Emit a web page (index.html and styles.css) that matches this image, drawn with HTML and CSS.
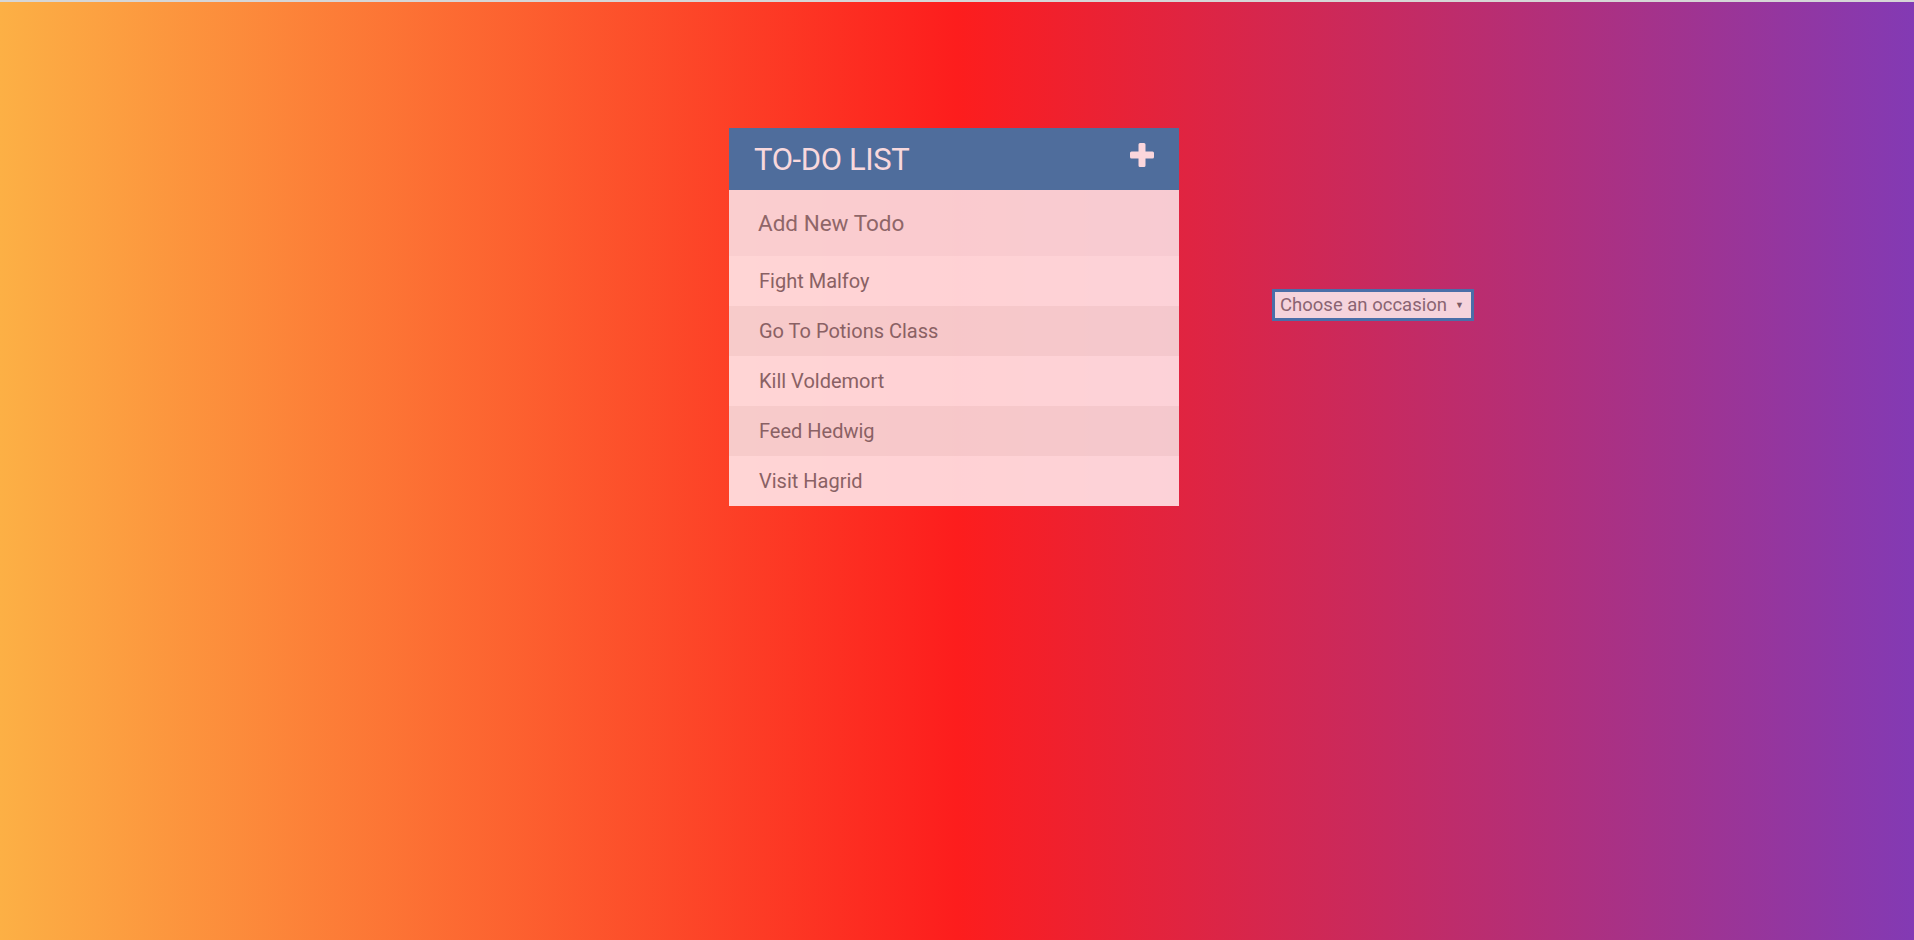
FILE: index.html
```html
<!DOCTYPE html>
<html>
<head>
<meta charset="utf-8">
<title>To-Do List</title>
<link rel="stylesheet" href="styles.css">
</head>
<body>
<div class="page">
  <div class="card">
    <div class="card-header">
      <h1 class="title">TO-DO LIST</h1>
      <svg class="plus" width="24" height="24" viewBox="0 0 24 24"><path d="M10 0h4a1.5 1.5 0 0 1 1.5 1.5V8.5h7A1.5 1.5 0 0 1 24 10v4a1.5 1.5 0 0 1-1.5 1.5h-7v7A1.5 1.5 0 0 1 14 24h-4a1.5 1.5 0 0 1-1.5-1.5v-7h-7A1.5 1.5 0 0 1 0 14v-4a1.5 1.5 0 0 1 1.5-1.5h7v-7A1.5 1.5 0 0 1 10 0z" fill="#fbd6dc"/></svg>
    </div>
    <div class="add-row">
      <input class="add-input" type="text" placeholder="Add New Todo">
    </div>
    <ul class="todo-list">
      <li class="todo odd">Fight Malfoy</li>
      <li class="todo even">Go To Potions Class</li>
      <li class="todo odd">Kill Voldemort</li>
      <li class="todo even">Feed Hedwig</li>
      <li class="todo odd">Visit Hagrid</li>
    </ul>
  </div>
  <div class="occasion">
    <span class="occasion-label">Choose an occasion</span>
    <span class="occasion-arrow">▼</span>
  </div>
</div>
</body>
</html>
```
FILE: styles.css
```css
html, body {
  margin: 0;
  padding: 0;
  height: 100%;
}
body {
  font-family: Roboto, "Liberation Sans", sans-serif;
  background: linear-gradient(to right, #fcb045, #fd1d1d, #833ab4);
  border-top: 2px solid #d6d6d6;
  box-sizing: border-box;
  overflow: hidden;
}
.page {
  display: flex;
  align-items: flex-start;
  padding: 126px 0 0 729px;
}
.card {
  width: 450px;
  flex: none;
}
.card-header {
  height: 62px;
  background: #4f6d9c;
  display: flex;
  align-items: center;
  justify-content: space-between;
  padding: 0 25px;
}
.title {
  margin: 0;
  font-weight: 400;
  font-size: 31px;
  color: #f8d8dc;
  letter-spacing: -0.4px;
}
.plus {
  display: block;
  margin-top: -8px;
}
.add-row {
  height: 66px;
  background: rgba(250, 222, 226, 0.9);
  display: flex;
  align-items: center;
}
.add-input {
  width: 100%;
  border: none;
  background: transparent;
  padding: 0 0 0 29px;
  font-family: Roboto, "Liberation Sans", sans-serif;
  font-size: 22.5px;
  color: #8a6366;
  outline: none;
}
.add-input::placeholder {
  color: #8f6668;
  opacity: 1;
}
.todo-list {
  list-style: none;
  margin: 0;
  padding: 0;
}
.todo {
  height: 50px;
  display: flex;
  align-items: center;
  padding-left: 30px;
  font-size: 20px;
  color: #8a6164;
}
.odd {
  background: rgba(255, 230, 233, 0.9);
}
.even {
  background: rgba(246, 218, 221, 0.9);
}
.occasion {
  margin: 161px 0 0 93px;
  width: 202px;
  height: 32px;
  box-sizing: border-box;
  border: 3px solid #4a6ea8;
  background: #f5d3dc;
  display: flex;
  align-items: center;
  justify-content: space-between;
  padding: 0 7px 0 5px;
  color: #8a6472;
  font-size: 18.5px;
}
.occasion-arrow {
  font-size: 9px;
  color: #7a5a66;
}
```
